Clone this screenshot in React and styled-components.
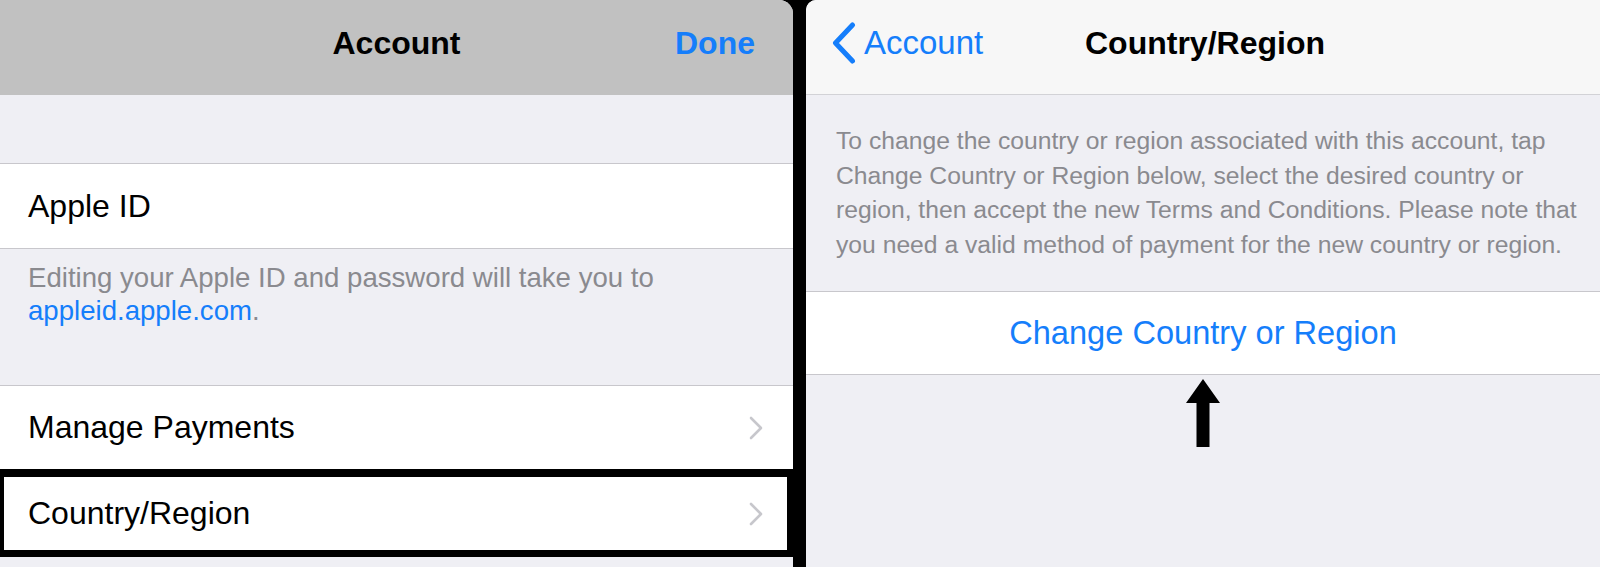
import React from 'react'
import styled, { createGlobalStyle } from 'styled-components'

const GlobalStyle = createGlobalStyle`
    html, body {
        margin : 0;
        padding : 0;
        background : #000;
    }
    body {
        font-family : "Liberation Sans", Arial, sans-serif;
        -webkit-font-smoothing : antialiased;
    }
`

const Screen = styled.div`
    display : flex;
    gap : 13px;
    width : 1600px;
    height : 567px;
    overflow : hidden;
    background : #000;
`

const Panel = styled.div`
    width : ${props => props.width || 'auto'};
    flex : ${props => props.width ? '0 0 auto' : '1'};
    display : flex;
    flex-direction : column;
    background : #efeff4;
    overflow : hidden;
    border-top-left-radius : ${props => props.leftRadius || 0};
    border-top-right-radius : ${props => props.rightRadius || 0};
`

const NavBar = styled.div`
    height : ${props => props.height};
    box-sizing : border-box;
    display : grid;
    grid-template-columns : 1fr auto 1fr;
    align-items : center;
    background : ${props => props.bg};
    border-bottom : ${props => props.divider ? '1px solid #d2d2d6' : 'none'};
    padding : 0 ${props => props.pad} 8px;
    flex-shrink : 0;
`

const NavTitle = styled.div`
    font-size : 32px;
    font-weight : 700;
    color : #000;
    margin-left : ${props => props.shift || '0'};
`

const DoneButton = styled.div`
    justify-self : end;
    font-size : 32px;
    font-weight : 700;
    color : #157efb;
`

const BackButton = styled.div`
    justify-self : start;
    display : flex;
    align-items : center;
    gap : 8px;
    font-size : 33px;
    color : #157efb;
`

const Band = styled.div`
    height : ${props => props.height};
    flex-shrink : 0;
`

const Group = styled.div`
    background : #fff;
    border-top : 1px solid #c8c7cc;
    border-bottom : ${props => props.open ? 'none' : '1px solid #c8c7cc'};
    flex-shrink : 0;
`

const Cell = styled.div`
    height : ${props => props.height || '84px'};
    box-sizing : border-box;
    display : flex;
    align-items : center;
    justify-content : space-between;
    padding : 0 30px 0 28px;
    font-size : 32px;
    color : #000;
    background : #fff;
`

const MarkedCell = styled(Cell)`
    height : 88px;
    border-style : solid;
    border-color : #000;
    border-width : 8px 6px 7px 4px;
    padding : 0 24px 0 24px;
`

const Footer = styled.div`
    padding : 12px 28px 58px;
    font-size : 27.6px;
    line-height : 33px;
    color : #8a8a8f;
    flex-shrink : 0;
`

const Link = styled.span`
    color : #157efb;
`

const Description = styled.div`
    padding : 29px 20px 29px 30px;
    font-size : 24.7px;
    line-height : 34.6px;
    color : #8a8a8f;
    white-space : nowrap;
    flex-shrink : 0;
`

const ActionRow = styled.div`
    height : 82px;
    display : flex;
    align-items : center;
    justify-content : center;
    background : #fff;
    border-top : 1px solid #c8c7cc;
    border-bottom : 1px solid #c8c7cc;
    font-size : 32.6px;
    color : #157efb;
    flex-shrink : 0;
`

const ArrowWrap = styled.div`
    display : flex;
    justify-content : center;
    padding-top : 4px;
`

const Chevron = () => (
    <svg width="14" height="24" viewBox="0 0 14 24">
        <path d="M2 2 L12 12 L2 22" fill="none" stroke="#c7c7cc" strokeWidth="2.6" strokeLinecap="round" strokeLinejoin="round"/>
    </svg>
)

const BackChevron = () => (
    <svg width="24" height="42" viewBox="0 0 24 42">
        <path d="M20.5 3 L3.5 21 L20.5 39" fill="none" stroke="#157efb" strokeWidth="5" strokeLinecap="round" strokeLinejoin="round"/>
    </svg>
)

const UpArrow = () => (
    <svg width="34" height="68" viewBox="0 0 34 68">
        <polygon points="17,0 34,24 23.5,24 23.5,68 10.5,68 10.5,24 0,24" fill="#000"/>
    </svg>
)

export default function App() {
    return (
        <>
            <GlobalStyle />
            <Screen>
                <Panel width="793px" rightRadius="14px">
                    <NavBar height="95px" bg="#c1c1c1" pad="38px">
                        <span />
                        <NavTitle shift="0px">Account</NavTitle>
                        <DoneButton>Done</DoneButton>
                    </NavBar>
                    <Band height="68px" />
                    <Group>
                        <Cell>Apple ID</Cell>
                    </Group>
                    <Footer>
                        Editing your Apple ID and password will take you to<br />
                        <Link>appleid.apple.com</Link>.
                    </Footer>
                    <Group open>
                        <Cell height="83px">
                            Manage Payments
                            <Chevron />
                        </Cell>
                        <MarkedCell>
                            Country/Region
                            <Chevron />
                        </MarkedCell>
                    </Group>
                </Panel>

                <Panel leftRadius="10px">
                    <NavBar height="95px" bg="#f7f7f7" pad="26px" divider>
                        <BackButton>
                            <BackChevron />
                            Account
                        </BackButton>
                        <NavTitle shift="4px">Country/Region</NavTitle>
                        <span />
                    </NavBar>
                    <Description>
                        To change the country or region associated with this account, tap<br />
                        Change Country or Region below, select the desired country or<br />
                        region, then accept the new Terms and Conditions. Please note that<br />
                        you need a valid method of payment for the new country or region.
                    </Description>
                    <ActionRow>Change Country or Region</ActionRow>
                    <ArrowWrap>
                        <UpArrow />
                    </ArrowWrap>
                </Panel>
            </Screen>
        </>
    )
}
